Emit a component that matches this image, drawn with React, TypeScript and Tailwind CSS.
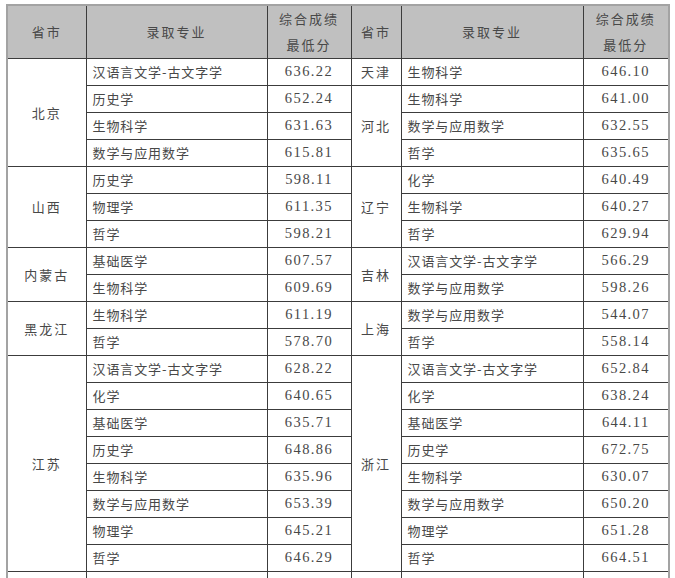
const left: [string, [string, string][]][] = [
  ["北京", [["汉语言文学-古文字学", "636.22"], ["历史学", "652.24"], ["生物科学", "631.63"], ["数学与应用数学", "615.81"]]],
  ["山西", [["历史学", "598.11"], ["物理学", "611.35"], ["哲学", "598.21"]]],
  ["内蒙古", [["基础医学", "607.57"], ["生物科学", "609.69"]]],
  ["黑龙江", [["生物科学", "611.19"], ["哲学", "578.70"]]],
  ["江苏", [["汉语言文学-古文字学", "628.22"], ["化学", "640.65"], ["基础医学", "635.71"], ["历史学", "648.86"], ["生物科学", "635.96"], ["数学与应用数学", "653.39"], ["物理学", "645.21"], ["哲学", "646.29"]]],
];

const right: [string, [string, string][]][] = [
  ["天津", [["生物科学", "646.10"]]],
  ["河北", [["生物科学", "641.00"], ["数学与应用数学", "632.55"], ["哲学", "635.65"]]],
  ["辽宁", [["化学", "640.49"], ["生物科学", "640.27"], ["哲学", "629.94"]]],
  ["吉林", [["汉语言文学-古文字学", "566.29"], ["数学与应用数学", "598.26"]]],
  ["上海", [["数学与应用数学", "544.07"], ["哲学", "558.14"]]],
  ["浙江", [["汉语言文学-古文字学", "652.84"], ["化学", "638.24"], ["基础医学", "644.11"], ["历史学", "672.75"], ["生物科学", "630.07"], ["数学与应用数学", "650.20"], ["物理学", "651.28"], ["哲学", "664.51"]]],
];

type Cell = { prov?: string; span: number; major: string; score: string };

function flatten(groups: [string, [string, string][]][]): Cell[] {
  const out: Cell[] = [];
  groups.forEach(([prov, items]) => {
    items.forEach(([major, score], i) => {
      out.push({ prov: i === 0 ? prov : undefined, span: items.length, major, score });
    });
  });
  return out;
}

const cjk = "font-['Noto_Sans_CJK_SC',sans-serif]";
const td = "border border-[#3c3c3c] p-0";
const num = "font-['Liberation_Serif','Noto_Sans_CJK_SC',serif] text-[14.5px] tracking-[1.4px] text-center";

export default function App() {
  const l = flatten(left);
  const r = flatten(right);

  return (
    <div className={`bg-white pl-[6px] pt-[4px] text-[#484848] ${cjk}`}>
      <table className="table-fixed border-collapse w-[662px] border-t-2 border-x-2 border-[#a3a3a3]">
        <colgroup>
          <col className="w-[79px]" />
          <col className="w-[181px]" />
          <col className="w-[84px]" />
          <col className="w-[50px]" />
          <col className="w-[182px]" />
          <col className="w-[86px]" />
        </colgroup>
        <thead>
          <tr className="h-[53px] bg-[#c0c0c0] text-[13px] tracking-[2px]">
            <th className={`${td} font-normal`}>省市</th>
            <th className={`${td} font-normal`}>录取专业</th>
            <th className={`${td} font-normal leading-[26px]`}>
              综合成绩
              <br />
              最低分
            </th>
            <th className={`${td} font-normal`}>省市</th>
            <th className={`${td} font-normal`}>录取专业</th>
            <th className={`${td} font-normal leading-[26px]`}>
              综合成绩
              <br />
              最低分
            </th>
          </tr>
        </thead>
        <tbody>
          {l.map((a, i) => {
            const b = r[i];
            return (
              <tr key={i} className="h-[27px] text-[13px]">
                {a.prov && (
                  <td rowSpan={a.span} className={`${td} text-center tracking-[2px]`}>
                    {a.prov}
                  </td>
                )}
                <td className={`${td} pl-[6px] tracking-[0.9px]`}>{a.major}</td>
                <td className={`${td} ${num}`}>{a.score}</td>
                {b.prov && (
                  <td rowSpan={b.span} className={`${td} text-center tracking-[2px]`}>
                    {b.prov}
                  </td>
                )}
                <td className={`${td} pl-[6px] tracking-[0.9px]`}>{b.major}</td>
                <td className={`${td} ${num}`}>{b.score}</td>
              </tr>
            );
          })}
          <tr className="h-[27px]">
            <td className={td}></td>
            <td className={td}></td>
            <td className={td}></td>
            <td className={td}></td>
            <td className={td}></td>
            <td className={td}></td>
          </tr>
        </tbody>
      </table>
    </div>
  );
}
